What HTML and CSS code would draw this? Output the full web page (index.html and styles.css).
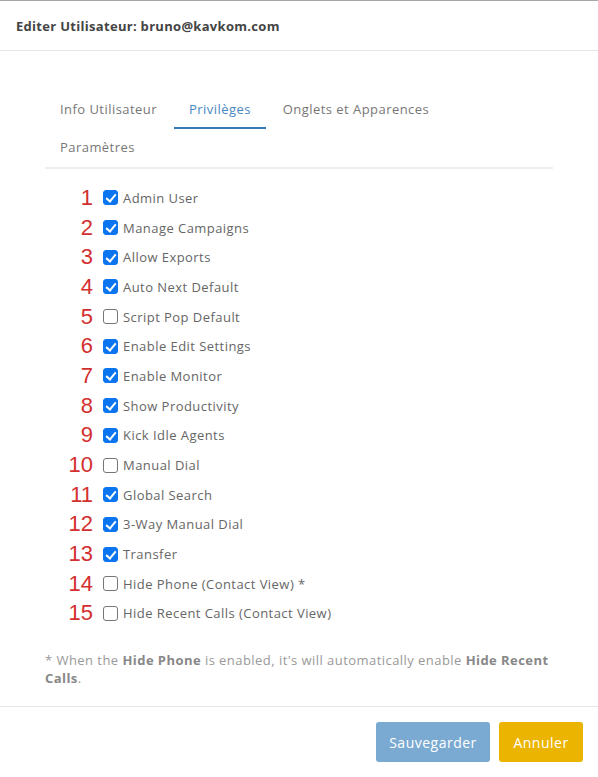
FILE: index.html
```html
<!DOCTYPE html>
<html lang="fr">
<head>
<meta charset="utf-8">
<title>Editer Utilisateur</title>
<link rel="stylesheet" href="styles.css">
</head>
<body>
<div class="modal">
  <div class="modal-header">
    <h4 class="modal-title">Editer Utilisateur: bruno@kavkom.com</h4>
  </div>
  <div class="modal-body">
    <ul class="tabs">
      <li class="tab">Info Utilisateur</li>
      <li class="tab active">Privilèges</li>
      <li class="tab">Onglets et Apparences</li>
      <li class="tab">Paramètres</li>
    </ul>
    <ul class="perms">
      <li class="perm"><span class="num">1</span><span class="cb on"></span><span class="lbl">Admin User</span></li>
      <li class="perm"><span class="num">2</span><span class="cb on"></span><span class="lbl">Manage Campaigns</span></li>
      <li class="perm"><span class="num">3</span><span class="cb on"></span><span class="lbl">Allow Exports</span></li>
      <li class="perm"><span class="num">4</span><span class="cb on"></span><span class="lbl">Auto Next Default</span></li>
      <li class="perm"><span class="num">5</span><span class="cb"></span><span class="lbl">Script Pop Default</span></li>
      <li class="perm"><span class="num">6</span><span class="cb on"></span><span class="lbl">Enable Edit Settings</span></li>
      <li class="perm"><span class="num">7</span><span class="cb on"></span><span class="lbl">Enable Monitor</span></li>
      <li class="perm"><span class="num">8</span><span class="cb on"></span><span class="lbl">Show Productivity</span></li>
      <li class="perm"><span class="num">9</span><span class="cb on"></span><span class="lbl">Kick Idle Agents</span></li>
      <li class="perm"><span class="num">10</span><span class="cb"></span><span class="lbl">Manual Dial</span></li>
      <li class="perm"><span class="num">11</span><span class="cb on"></span><span class="lbl">Global Search</span></li>
      <li class="perm"><span class="num">12</span><span class="cb on"></span><span class="lbl">3-Way Manual Dial</span></li>
      <li class="perm"><span class="num">13</span><span class="cb on"></span><span class="lbl">Transfer</span></li>
      <li class="perm"><span class="num">14</span><span class="cb"></span><span class="lbl">Hide Phone (Contact View) *</span></li>
      <li class="perm"><span class="num">15</span><span class="cb"></span><span class="lbl">Hide Recent Calls (Contact View)</span></li>
    </ul>
    <p class="note">* When the <b>Hide Phone</b> is enabled, it's will automatically enable <b>Hide Recent Calls</b>.</p>
  </div>
  <div class="modal-footer">
    <button class="btn btn-save">Sauvegarder</button>
    <button class="btn btn-cancel">Annuler</button>
  </div>
</div>
</body>
</html>
```
FILE: styles.css
```css
html, body {
  margin: 0;
  padding: 0;
  background: #fff;
}
body {
  font-family: "Open Sans", "DejaVu Sans", sans-serif;
  font-size: 13px;
  letter-spacing: 0.45px;
  color: #666;
}
.modal {
  width: 598px;
  height: 777px;
  border-top: 1px solid #a6a6a6;
  box-sizing: border-box;
  display: flex;
  flex-direction: column;
}
.modal-header {
  height: 49px;
  border-bottom: 1px solid #e5e5e5;
  display: flex;
  align-items: center;
  padding: 0 16px;
}
.modal-title {
  margin: 0;
  font-size: 13px;
  font-weight: 700;
  letter-spacing: 0.3px;
  color: #444;
}
.modal-body {
  flex: 1;
  padding: 40px 45px 0 45px;
}
.tabs {
  list-style: none;
  margin: 0;
  padding: 0 4px 0 0;
  display: flex;
  flex-wrap: wrap;
  border-bottom: 2px solid #eee;
}
.tab {
  padding: 9px 15px;
  line-height: 18px;
  border-bottom: 2px solid transparent;
  margin-right: 2px;
  color: #777;
}
.tab.active {
  color: #4a86c0;
  border-bottom-color: #337ab7;
}
.perms {
  list-style: none;
  margin: 14px 0 0 0;
  padding: 0;
}
.perm {
  height: 29.7px;
  display: flex;
  align-items: center;
}
.num {
  width: 48px;
  text-align: right;
  font-family: "Liberation Sans", Arial, sans-serif;
  font-size: 22px;
  letter-spacing: 0;
  color: #d32f2f;
  margin-right: 10px;
  line-height: 1;
}
.cb {
  width: 13px;
  height: 13px;
  border: 1px solid #767676;
  border-radius: 3px;
  box-sizing: content-box;
  margin-right: 5px;
  position: relative;
}
.cb.on {
  background: #0b75ef;
  border-color: #0b75ef;
}
.cb.on::after {
  content: "";
  position: absolute;
  left: 4px;
  top: 1px;
  width: 4px;
  height: 8px;
  border: solid #fff;
  border-width: 0 2px 2px 0;
  transform: rotate(40deg);
}
.lbl {
  color: #666;
}
.note {
  margin: 23px 0 0 0;
  line-height: 18px;
  color: #999;
}
.note b {
  color: #888;
}
.modal-footer {
  border-top: 1px solid #e5e5e5;
  padding: 15px 15px 15px 0;
  display: flex;
  justify-content: flex-end;
  gap: 9px;
}
.btn {
  height: 40px;
  border: none;
  border-radius: 3px;
  color: #fff;
  font-family: "Open Sans", "DejaVu Sans", sans-serif;
  font-size: 14px;
  letter-spacing: 0.5px;
  padding: 0 10px;
}
.btn-save {
  background: #7aa9d2;
  width: 114px;
}
.btn-cancel {
  background: #ebb400;
  width: 84px;
}
```
